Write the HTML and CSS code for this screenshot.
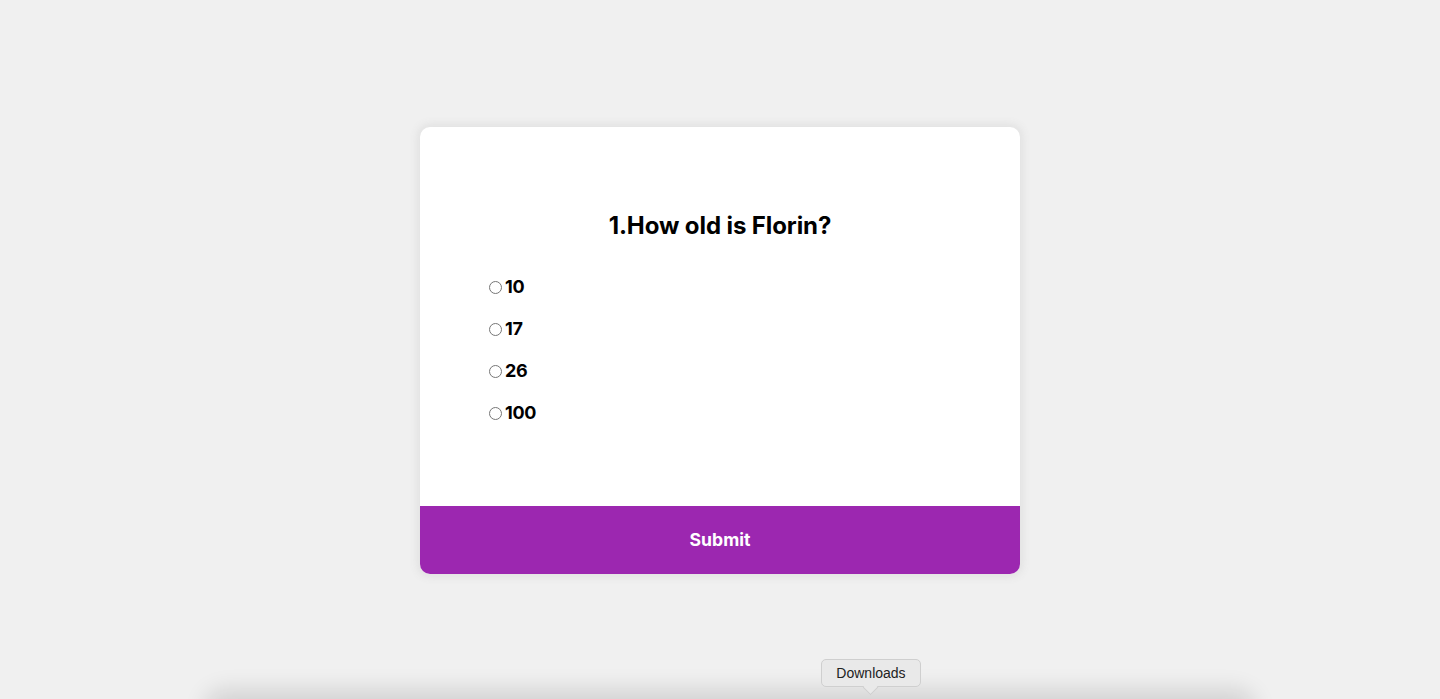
FILE: index.html
```html
<!DOCTYPE html>
<html lang="en">
<head>
<meta charset="UTF-8">
<title>Quiz</title>
<link rel="stylesheet" href="styles.css">
</head>
<body>
  <div class="quiz-container">
    <div class="quiz-header">
      <h2 class="question">1.How old is Florin?</h2>
      <ul class="answers">
        <li class="answer"><input type="radio" name="answer" id="a"><label for="a">10</label></li>
        <li class="answer"><input type="radio" name="answer" id="b"><label for="b">17</label></li>
        <li class="answer"><input type="radio" name="answer" id="c"><label for="c">26</label></li>
        <li class="answer"><input type="radio" name="answer" id="d"><label for="d">100</label></li>
      </ul>
    </div>
    <button class="submit">Submit</button>
  </div>
  <div class="dock-shadow"></div>
  <div class="tooltip">Downloads</div>
</body>
</html>
```

FILE: styles.css
```css
* { box-sizing: border-box; }

body {
  margin: 0;
  padding-top: 2px;
  height: 100vh;
  overflow: hidden;
  background: #f0f0f0;
  font-family: "Inter", "Liberation Sans", sans-serif;
  display: flex;
  align-items: center;
  justify-content: center;
  position: relative;
}

.quiz-container {
  width: 600px;
  background: #fff;
  border-radius: 10px;
  overflow: hidden;
  box-shadow: 0 0 10px 2px rgba(100, 100, 100, 0.12);
}

.quiz-header {
  padding: 64px 64px 64px;
}

.question {
  margin: 0;
  padding: 17px 16px 15px;
  text-align: center;
  font-size: 24px;
  line-height: 36px;
  font-weight: 700;
  color: #000;
  letter-spacing: -0.1px;
}

.answers {
  list-style: none;
  padding: 0;
  margin: 15px 0 16px;
}

.answer {
  font-size: 18px;
  line-height: 26px;
  font-weight: 700;
  margin: 16px 0;
  display: flex;
  align-items: center;
  color: #000;
  letter-spacing: -0.3px;
}

.answer:first-child { margin-top: 0; }
.answer:last-child { margin-bottom: 0; }

.answer input {
  margin: 0 3px 0 5px;
  width: 13px;
  height: 13px;
}

.submit {
  display: block;
  width: 100%;
  border: none;
  background: #9c27b0;
  color: #fff;
  font-family: inherit;
  font-size: 17.6px;
  font-weight: 700;
  line-height: 26px;
  padding: 21px;
  cursor: pointer;
}

.dock-shadow {
  position: absolute;
  left: 210px;
  right: 190px;
  bottom: -30px;
  height: 30px;
  border-radius: 20px;
  box-shadow: 0 -4px 22px 6px rgba(0, 0, 0, 0.12);
}

.tooltip {
  position: absolute;
  left: 821px;
  top: 659px;
  width: 100px;
  height: 28px;
  background: #e9e9e9;
  border: 1px solid #cfcfcf;
  border-radius: 5px;
  font-family: "Liberation Sans", "Noto Sans", sans-serif;
  font-size: 14px;
  color: #222;
  display: flex;
  align-items: center;
  justify-content: center;
}

.tooltip::after {
  content: "";
  position: absolute;
  left: 43px;
  bottom: -7px;
  width: 10px;
  height: 10px;
  background: #e9e9e9;
  border-right: 1px solid #cfcfcf;
  border-bottom: 1px solid #cfcfcf;
  transform: rotate(45deg);
}
```
